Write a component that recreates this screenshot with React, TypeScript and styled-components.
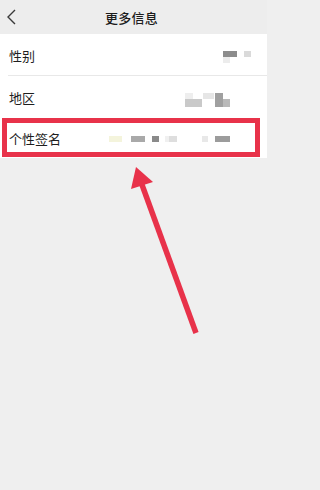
import React from 'react';
import styled, { createGlobalStyle } from 'styled-components';

type Cell = { x: number; y: number; w: number; h: number; c: string };

type RowData = {
    label: string;
    top: number;
    x0: number;
    x1: number;
    cells: Cell[];
    highlighted?: boolean;
};

const ROW_H = 41;
const PAGE_W = 267;

const rows: RowData[] = [
    {
        label: '性别',
        top: 34,
        x0: 218,
        x1: 256,
        cells: [
            { x: 223, y: 51, w: 14, h: 6, c: '#8c8c8c' },
            { x: 244, y: 51, w: 7, h: 6, c: '#dadada' },
            { x: 223, y: 57, w: 7, h: 6, c: '#ececec' },
        ],
    },
    {
        label: '地区',
        top: 76,
        x0: 182,
        x1: 232,
        cells: [
            { x: 185, y: 93, w: 8, h: 6, c: '#eeeeee' },
            { x: 185, y: 99, w: 17, h: 8, c: '#c9c9c9' },
            { x: 203, y: 93, w: 11, h: 6, c: '#e6e6e6' },
            { x: 215, y: 93, w: 8, h: 14, c: '#a0a0a0' },
            { x: 223, y: 99, w: 7, h: 8, c: '#b9b9b9' },
        ],
    },
    {
        label: '个性签名',
        top: 117,
        x0: 106,
        x1: 234,
        highlighted: true,
        cells: [
            { x: 109, y: 136, w: 13, h: 6, c: '#f4f4dc' },
            { x: 131, y: 136, w: 14, h: 6, c: '#a9a9a9' },
            { x: 152, y: 136, w: 7, h: 6, c: '#8a8a8a' },
            { x: 165, y: 136, w: 4, h: 6, c: '#f0f0f0' },
            { x: 169, y: 136, w: 8, h: 6, c: '#dedede' },
            { x: 202, y: 136, w: 6, h: 6, c: '#e8e8e8' },
            { x: 215, y: 136, w: 15, h: 6, c: '#9c9c9c' },
        ],
    },
];

const App = () => (
    <Page>
        <GlobalStyle />
        <Header>
            <BackIcon width="14" height="20" viewBox="0 0 14 20">
                <polyline points="10,3 3,10 10,17" />
            </BackIcon>
            <Title>更多信息</Title>
            <span />
        </Header>
        <List>
            {rows.map((r, i) => (
                <React.Fragment key={r.label}>
                    {i === 1 && <Divider />}
                    <Row>
                        <Label>{r.label}</Label>
                        <Mosaic
                            $right={PAGE_W - r.x1}
                            width={r.x1 - r.x0}
                            height={ROW_H}
                            viewBox={`${r.x0} ${r.top} ${r.x1 - r.x0} ${ROW_H}`}
                        >
                            {r.cells.map((c, j) => (
                                <rect key={j} x={c.x} y={c.y} width={c.w} height={c.h} fill={c.c} />
                            ))}
                        </Mosaic>
                        {r.highlighted && <Highlight />}
                    </Row>
                </React.Fragment>
            ))}
        </List>
        <Arrow width={PAGE_W} height="490" viewBox="0 0 267 490">
            <line x1="196" y1="333" x2="141" y2="182" />
            <polygon points="136,167 131,189 153,182" />
        </Arrow>
    </Page>
);

export default App;

const GlobalStyle = createGlobalStyle`
    html, body {
        margin: 0;
        padding: 0;
        background: #efefef;
    }
    body {
        font-family: "Noto Sans CJK SC", "Noto Sans", sans-serif;
    }
`;

const Page = styled.div`
    position: relative;
    width: 267px;
    height: 490px;
    background: #efefef;
    overflow: hidden;
`;

const Header = styled.div`
    display: grid;
    grid-template-columns: 40px 1fr 40px;
    align-items: center;
    height: 34px;
    background: #ededed;
`;

const BackIcon = styled.svg`
    margin-left: 5px;
    polyline {
        fill: none;
        stroke: #3a3a3a;
        stroke-width: 1.4;
    }
`;

const Title = styled.div`
    text-align: center;
    font-size: 13px;
    font-weight: 500;
    color: #1c1c1c;
    letter-spacing: 0.3px;
    padding-right: 4px;
`;

const List = styled.div`
    display: flex;
    flex-direction: column;
    background: #ffffff;
`;

const Divider = styled.div`
    height: 1px;
    margin-left: 8px;
    background: #e8e8e8;
`;

const Row = styled.div`
    position: relative;
    display: flex;
    align-items: center;
    justify-content: space-between;
    height: 41px;
    padding-left: 9px;
`;

const Label = styled.span`
    font-size: 13px;
    line-height: 1;
    padding-top: 2px;
    color: #1e1e1e;
`;

const Mosaic = styled.svg<{ $right: number }>`
    margin-right: ${(p) => p.$right}px;
    display: block;
`;

const Highlight = styled.div`
    position: absolute;
    left: 2px;
    top: 1px;
    width: 258px;
    height: 39px;
    box-sizing: border-box;
    border: 5px solid #e8324a;
`;

const Arrow = styled.svg`
    position: absolute;
    left: 0;
    top: 0;
    pointer-events: none;
    line {
        stroke: #e8324a;
        stroke-width: 5.5;
    }
    polygon {
        fill: #e8324a;
    }
`;
